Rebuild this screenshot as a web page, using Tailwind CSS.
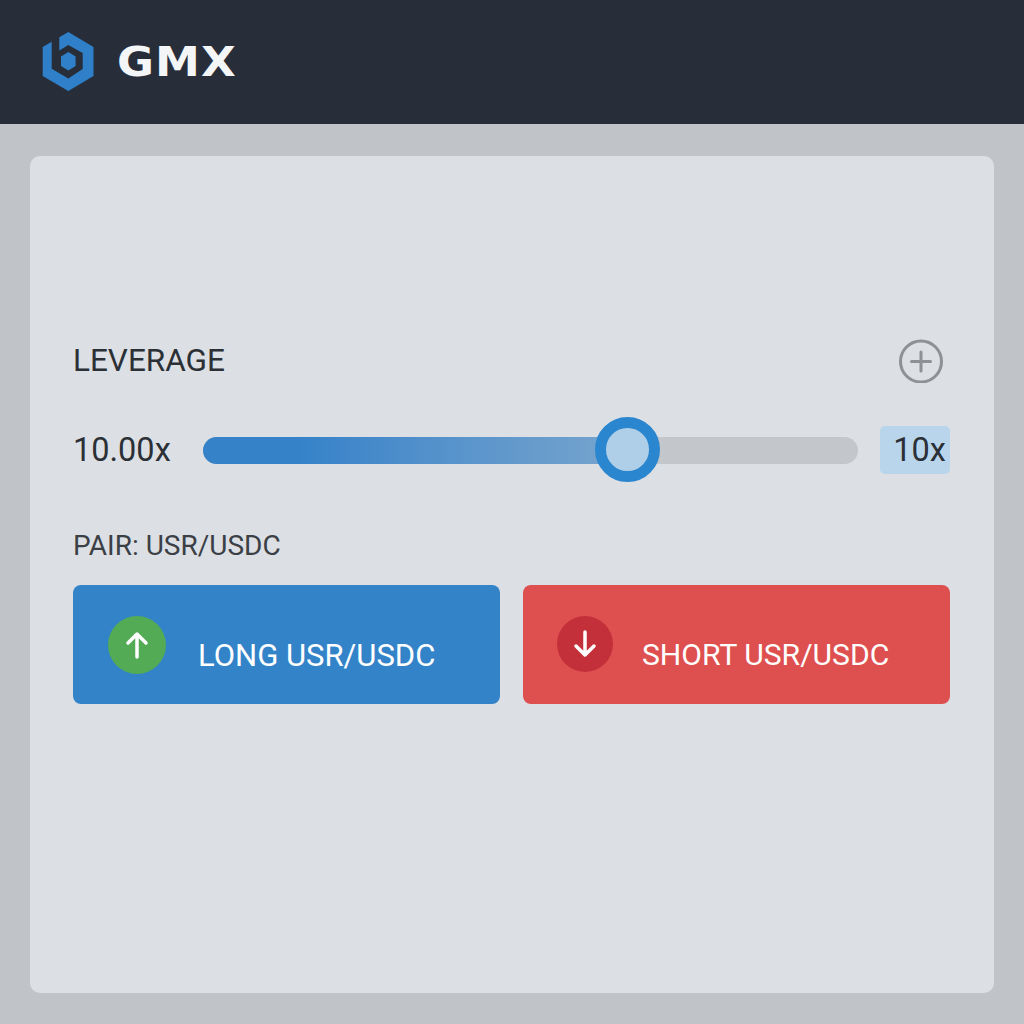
<!doctype html>
<html><head><meta charset="utf-8"><script src="https://cdn.jsdelivr.net/npm/@tailwindcss/browser@4"></script></head>
<body class="m-0 h-[1024px] bg-[#c0c4c9] font-['Roboto',sans-serif]">
<header class="h-[124px] bg-[#272e3a] flex items-center pl-[42px] gap-[23px]">
<svg width="52" height="60" viewBox="0 0 52 60" class="shrink-0">
<path fill="#2f80c8" d="M26.300 0 51.500 15V44L26.300 59 .7 44V15Z"/>
<path fill="#272e3a" d="M9.700 7 17.300 2.500V18.500L26.300 13 40.700 21V37L26.300 46.500 9.700 36.700Z"/>
<path fill="#2f80c8" d="M26.300 20 33.600 24.500V34L26.300 38.500 19 34V24.500Z"/>
</svg>
<span class="inline-block origin-left scale-x-[1.1] font-['DejaVu_Sans',sans-serif] font-bold text-[41px] leading-none tracking-[1px] text-[#f4f5f6]">GMX</span>
</header>
<main class="pt-[32px]">
<section class="mx-[30px] h-[837px] rounded-[10px] bg-[#dcdfe3] pl-[43px] pr-[44px] pt-[183px]">
<div class="flex items-center justify-between h-[44px] pr-[7px]">
<span class="text-[31.500px] leading-none text-[#2b2f36]">LEVERAGE</span>
<svg width="44" height="44" viewBox="0 -1 44 44" fill="none" stroke="#8d9094" stroke-width="3"><circle cx="22" cy="21.500" r="20.500"/><path d="M22 12V31M12.500 21.500H31.500" stroke-linecap="round"/></svg>
</div>
<div class="flex items-center h-[64px] mt-[35px]">
<span class="w-[130px] text-[32.500px] leading-none text-[#2b2f36]">10.00x</span>
<div class="relative mt-[1px] h-[27px] w-[655px] rounded-full bg-[#c3c6ca]">
<div class="h-full w-[424px] rounded-l-full bg-gradient-to-r from-[#3582c9] from-[22%] to-[#78a5cd]"></div>
<div class="absolute left-[392px] top-[-20px] size-[65px] rounded-full border-[11px] border-[#2a86cf] bg-[#afcfe8]"></div>
</div>
<span class="ml-[22px] w-[70px] h-[48px] rounded-[5px] bg-[#b8d5ec] flex items-center justify-end pr-[4px] text-[32.500px] leading-none text-[#2b2f36]">10x</span>
</div>
<p class="mt-[49px] text-[28px] leading-[30px] text-[#3b3f46]">PAIR: USR/USDC</p>
<div class="flex gap-[23px] mt-[24px]">
<button class="relative h-[119px] w-[427px] rounded-[8px] bg-[#3383c9] text-white text-[31px] leading-none">
<span class="absolute left-[35px] top-[31px] size-[58px] rounded-full bg-[#53ab55] flex items-center justify-center">
<svg width="24" height="28" viewBox="0 0 24 28" fill="none" stroke="#fff" stroke-width="3.500" stroke-linecap="round" stroke-linejoin="round"><path d="M12 26V3M3 12 12 3 21 12"/></svg></span>
<span class="absolute left-[125px] top-[55px]">LONG USR/USDC</span>
</button>
<button class="relative h-[119px] w-[427px] rounded-[8px] bg-[#de4f4f] text-white text-[30.100px] leading-none">
<span class="absolute left-[34px] top-[31px] size-[56px] rounded-full bg-[#c4303a] flex items-center justify-center">
<svg width="24" height="28" viewBox="0 0 24 28" fill="none" stroke="#fff" stroke-width="3.500" stroke-linecap="round" stroke-linejoin="round"><path d="M12 2V25M3 16 12 25 21 16"/></svg></span>
<span class="absolute left-[119px] top-[55px]">SHORT USR/USDC</span>
</button>
</div>
</section>
</main>
</body></html>
